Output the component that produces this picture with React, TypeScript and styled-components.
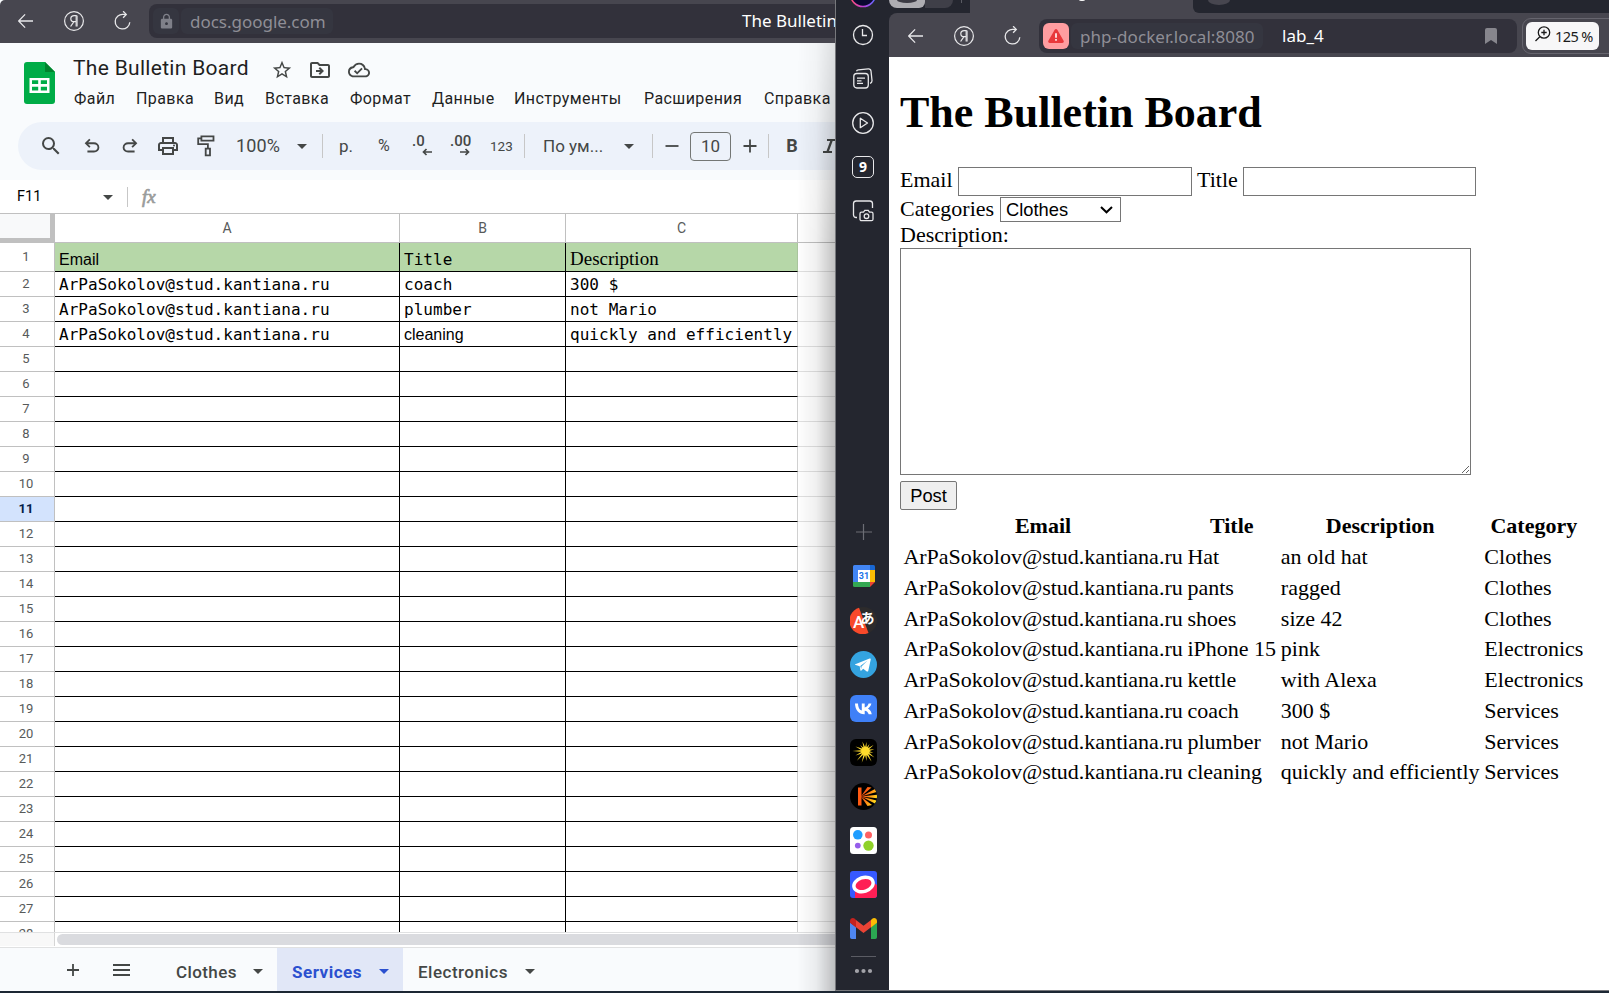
import React from "react";
import styled, { createGlobalStyle } from "styled-components";
import {
  MdSearch,
  MdStarBorder,
  MdOutlineDriveFileMove,
  MdOutlineCloudDone,
  MdOutlinePrint,
  MdLock,
} from "react-icons/md";

const GlobalStyle = createGlobalStyle`
  *, *::before, *::after { box-sizing: border-box; }
  html, body { margin: 0; padding: 0; overflow: hidden; }
  body { background: #1c2733; }
`;

const ui = `Roboto, "Liberation Sans", sans-serif`;
const chromeFont = `"Noto Sans", "Open Sans", sans-serif`;

const Desktop = styled.div`
  display: flex;
  width: 1609px;
  height: 993px;
  overflow: hidden;
  background: #1c2733;
`;

/* ---------- browser chrome ---------- */

const BrowserBar = styled.div<{ $h: number; $pad: string; $radius?: string }>`
  display: flex;
  align-items: center;
  flex: none;
  height: ${(p) => p.$h}px;
  padding: ${(p) => p.$pad};
  background: #47464f;
  border-radius: ${(p) => p.$radius ?? "0"};
`;

const NavIcons = styled.div`
  display: flex;
  align-items: center;
  flex: none;
  width: 131px;
  svg { display: block; flex: none; }
`;

const UrlBar = styled.div<{ $w?: number; $radius?: string }>`
  display: flex;
  align-items: center;
  flex: none;
  width: ${(p) => (p.$w ? `${p.$w}px` : "auto")};
  height: 34px;
  padding: 0 4px;
  border-radius: ${(p) => p.$radius ?? "8px"};
  background: #32313b;
  font-family: ${chromeFont};
  white-space: nowrap;
`;

const SiteBadge = styled.span<{ $danger?: boolean }>`
  display: flex;
  align-items: center;
  justify-content: center;
  flex: none;
  width: 26px;
  height: 26px;
  border-radius: 6px;
  color: #7f8089;
  background: ${(p) => (p.$danger ? "#ff9da0" : "#353640")};
`;

const Host = styled.span<{ $w: number; $ls: number }>`
  flex: none;
  width: ${(p) => p.$w}px;
  height: 26px;
  margin-left: 2px;
  padding-left: 9px;
  border-radius: 6px;
  background: #353640;
  color: #8f8e96;
  font-size: 17px;
  line-height: 27px;
  letter-spacing: ${(p) => p.$ls}px;
`;

const PageTitle = styled.span<{ $left: number }>`
  margin-left: ${(p) => p.$left}px;
  color: #fff;
  font-size: 17px;
  line-height: 26px;
`;

const BackIcon = () => (
  <svg width="16" height="16" viewBox="0 0 16 16" fill="none" stroke="#e8e8ea" strokeWidth="1.3">
    <path d="M15 8H.7M7.100 1.400L.6 8l6.500 6.600" />
  </svg>
);

const YandexIcon = () => (
  <svg width="22" height="22" viewBox="0 0 22 22" fill="none" stroke="#e8e8ea" strokeWidth="1.2">
    <circle cx="11" cy="11" r="9.400" />
    <path d="M13.200 16.500V5.600h-2c-2 0-3.400 1.100-3.400 3.100 0 1.900 1.200 3 3.200 3h2M10.800 11.800l-3.200 4.700" />
    <path d="M14.200 16.500V5.600" strokeWidth="0.9" />
  </svg>
);

const ReloadIcon = () => (
  <svg width="18" height="20" viewBox="0 0 18 20" fill="none" stroke="#e8e8ea" strokeWidth="1.3">
    <path d="M12 3.400H9.300A7.300 7.300 0 1 0 15.800 11.200" />
    <path d="M9.100 .2l3.200 3.200-3.200 3.400" />
  </svg>
);

const Gap = styled.span<{ $w: number }>`
  flex: none;
  width: ${(p) => p.$w}px;
`;

const NavButtons = () => (
  <NavIcons>
    <BackIcon />
    <Gap $w={29} />
    <YandexIcon />
    <Gap $w={29} />
    <ReloadIcon />
  </NavIcons>
);

/* ---------- spreadsheet window ---------- */

const SheetWindow = styled.section`
  position: relative;
  display: flex;
  flex-direction: column;
  flex: none;
  width: 835px;
  height: 991px;
  overflow: hidden;
  background: #f9fbfd;
  font-family: ${ui};
`;

const EdgeShadow = styled.div`
  position: absolute;
  right: 0;
  top: 43px;
  bottom: 0;
  width: 38px;
  background: linear-gradient(to right, rgba(0, 0, 0, 0), rgba(0, 0, 0, 0.06) 50%, rgba(0, 0, 0, 0.24));
  mask-image: linear-gradient(to bottom, rgba(0, 0, 0, 0.45), #000 200px);
  pointer-events: none;
`;

const DocHeader = styled.header`
  display: flex;
  flex: none;
  height: 79px;
  padding: 0 0 0 24px;
`;

const Logo = styled.div`
  flex: none;
  width: 49px;
  padding-top: 19px;
`;

const DocInfo = styled.div`
  flex: none;
`;

const TitleRow = styled.div`
  display: flex;
  align-items: center;
  height: 40px;
  padding-top: 13px;
  color: #444746;
  svg { display: block; flex: none; }
`;

const DocTitle = styled.div`
  width: 198px;
  margin-top: -4px;
  color: #1f1f1f;
  font-size: 21px;
  line-height: 26px;
  letter-spacing: 0.3px;
  white-space: nowrap;
`;

const MenuBar = styled.nav`
  display: flex;
  height: 32px;
  align-items: center;
  padding-left: 1px;
  margin-top: -1px;
  padding-top: 1px;
`;

const MenuItem = styled.span<{ $w: number }>`
  flex: none;
  width: ${(p) => p.$w}px;
  color: #1f1f1f;
  font-size: 16px;
  line-height: 24px;
  letter-spacing: 0.42px;
  white-space: nowrap;
`;

const ToolPill = styled.div`
  display: flex;
  align-items: center;
  flex: none;
  height: 48px;
  margin-left: 18px;
  border-radius: 24px 0 0 24px;
  background: #edf2fa;
  color: #444746;
`;

const Tool = styled.span<{ $w: number; $size?: number; $weight?: number; $start?: boolean; $ls?: number }>`
  display: flex;
  align-items: center;
  justify-content: ${(p) => (p.$start ? "flex-start" : "center")};
  flex: none;
  width: ${(p) => p.$w}px;
  font-size: ${(p) => p.$size ?? 17}px;
  font-weight: ${(p) => p.$weight ?? 400};
  letter-spacing: ${(p) => p.$ls ?? 0}px;
  line-height: 20px;
  white-space: nowrap;
  svg { display: block; flex: none; }
`;

const Divider = styled.span<{ $h: number }>`
  flex: none;
  width: 1px;
  height: ${(p) => p.$h}px;
  background: #c7c7c7;
`;

const SizeBox = styled.span`
  display: flex;
  align-items: center;
  justify-content: center;
  flex: none;
  width: 41px;
  height: 29px;
  border: 1px solid #747775;
  border-radius: 4px;
  font-size: 17px;
`;

const Caret = styled.span<{ $color?: string }>`
  flex: none;
  width: 0;
  height: 0;
  border: 5px solid transparent;
  border-top-color: ${(p) => p.$color ?? "#444746"};
  border-bottom: 0;
`;

const DecimalText = styled.span`
  align-self: flex-start;
  font-size: 15px;
  font-weight: 500;
  line-height: 13px;
`;

const DecimalBox = styled.span<{ $w: number }>`
  display: flex;
  flex-direction: column;
  align-items: flex-start;
  flex: none;
  width: ${(p) => p.$w}px;
  height: 22px;
`;

const FormulaBar = styled.div`
  display: flex;
  align-items: center;
  flex: none;
  height: 34px;
  margin-top: 10px;
  padding: 1px 0 0 17px;
  border-bottom: 1px solid #c0c0c0;
  background: #fff;
`;

const CellName = styled.span`
  width: 86px;
  color: #000;
  font-size: 14.5px;
  line-height: 20px;
`;

const Fx = styled.span`
  margin-left: 14px;
  color: #9a9c9b;
  font: italic 400 19px/22px "Liberation Serif", serif;
  -webkit-text-stroke: 0.7px #9a9c9b;
`;

const Grid = styled.div`
  flex: none;
  height: 718px;
  overflow: hidden;
  background: #fff;
`;

const GridRow = styled.div<{ $h: number }>`
  display: flex;
  height: ${(p) => p.$h}px;
`;

const Corner = styled.div`
  flex: none;
  width: 55px;
  border: solid #c0c0c0;
  border-width: 0 5px 5px 0;
  background: #f8f9fa;
`;

const ColHead = styled.div<{ $w?: number }>`
  display: flex;
  align-items: center;
  justify-content: center;
  flex: ${(p) => (p.$w ? "none" : "1")};
  width: ${(p) => (p.$w ? `${p.$w}px` : "auto")};
  padding-bottom: 1px;
  border: solid #c0c0c0;
  border-width: 0 ${(p) => (p.$w ? 1 : 0)}px 1px 0;
  color: #575a5a;
  font-size: 14px;
`;

const RowHead = styled.div<{ $active?: boolean }>`
  display: flex;
  align-items: center;
  justify-content: center;
  flex: none;
  width: 55px;
  padding: 0 2px 1px 0;
  border: solid #c0c0c0;
  border-width: 0 1px 1px 0;
  background: ${(p) => (p.$active ? "#d3e3fd" : "#fff")};
  color: ${(p) => (p.$active ? "#041e49" : "#575a5a")};
  font-size: 13px;
  line-height: 20px;
  font-weight: ${(p) => (p.$active ? 700 : 400)};
`;

const faces = {
  mono: `400 16px/20px "DejaVu Sans Mono", "Liberation Mono", monospace`,
  sans: `400 16px/20px "Liberation Sans", Arial, sans-serif`,
  serif: `400 19px/20px "Liberation Serif", serif`,
};
type Face = keyof typeof faces;

const Cell = styled.div<{ $w: number; $face: Face; $head?: boolean; $last?: boolean }>`
  display: flex;
  align-items: flex-end;
  flex: none;
  width: ${(p) => p.$w}px;
  padding: 0 0 ${(p) => (p.$face === "serif" ? 2 : 1)}px 4px;
  border: solid #000;
  border-width: 0 1px 1px 0;
  border-right-color: ${(p) => (p.$last ? (p.$head ? "#a9c49d" : "#d0d0d0") : "#000")};
  background: ${(p) => (p.$head ? "#b6d7a8" : "#fff")};
  color: #000;
  font: ${(p) => faces[p.$face]};
  letter-spacing: ${(p) => (p.$face === "mono" ? 0.03 : 0)}px;
  white-space: nowrap;
`;

const OuterCell = styled.div`
  flex: 1;
  border-bottom: 1px solid #e0e0e0;
`;

const ScrollStrip = styled.div`
  display: flex;
  align-items: flex-start;
  flex: none;
  height: 16px;
  border: solid #e0e1e2;
  border-width: 1px 0;
  background: #fff;
`;

const ScrollCorner = styled.div`
  width: 55px;
  height: 13px;
  border-right: 1px solid #d5d5d5;
  background: #f8f8f8;
`;

const ScrollThumb = styled.div`
  flex: 1;
  height: 11px;
  margin: 1px 0 0 2px;
  border-radius: 6px 0 0 6px;
  background: #dadbdf;
`;

const SheetTabs = styled.div`
  display: flex;
  align-items: center;
  flex: none;
  height: 43px;
  padding-left: 67px;
  color: #444746;
`;

const SheetTab = styled.div<{ $w: number; $active?: boolean; $ls: number }>`
  display: flex;
  align-items: center;
  justify-content: space-between;
  flex: none;
  width: ${(p) => p.$w}px;
  height: 43px;
  padding: 4px 14px 0 15px;
  background: ${(p) => (p.$active ? "#e1e7f7" : "transparent")};
  color: ${(p) => (p.$active ? "#2b50cf" : "#444746")};
  font-size: 17px;
  font-weight: ${(p) => (p.$active ? 700 : 500)};
  letter-spacing: ${(p) => p.$ls}px;
`;

/* ---------- php page window ---------- */

const AppWindow = styled.section`
  display: flex;
  flex: none;
  width: 774px;
  height: 991px;
  border-left: 1px solid #77787c;
  border-bottom: 1px solid #77787c;
  overflow: hidden;
  background: #24262f;
`;

const SideRail = styled.aside`
  display: flex;
  flex-direction: column;
  align-items: center;
  justify-content: space-between;
  flex: none;
  width: 53px;
  padding-bottom: 11px;
`;

const RailGroup = styled.div<{ $shift?: number }>`
  display: flex;
  flex-direction: column;
  align-items: center;
  padding-left: ${(p) => p.$shift ?? 0}px;
`;

const RailItem = styled.div<{ $h?: number }>`
  display: flex;
  align-items: center;
  justify-content: center;
  width: 53px;
  height: ${(p) => p.$h ?? 44}px;
  svg { display: block; }
`;

const RailBadge = styled.span`
  display: flex;
  align-items: center;
  justify-content: center;
  width: 22px;
  height: 22px;
  border: 1.3px solid #e8e8ea;
  border-radius: 5px;
  color: #fff;
  font: 700 14px/20px ${chromeFont};
`;

const RailLine = styled.div`
  width: 25px;
  height: 1px;
  background: #5b5c64;
`;

const AppMain = styled.div`
  display: flex;
  flex-direction: column;
  flex: 1;
`;

const TabStrip = styled.div`
  display: flex;
  flex: none;
  height: 13px;
  overflow: hidden;
`;

const TabPill = styled.div<{ $w: number; $color: string; $h: number; $r: string }>`
  display: flex;
  justify-content: center;
  flex: none;
  width: ${(p) => p.$w}px;
  height: ${(p) => p.$h}px;
  border-radius: ${(p) => p.$r};
  background: ${(p) => p.$color};
`;

const TabNub = styled.span<{ $w: number; $h: number; $color: string }>`
  width: ${(p) => p.$w}px;
  height: ${(p) => p.$h}px;
  border-radius: 0 0 50% 50% / 0 0 100% 100%;
  background: ${(p) => p.$color};
`;

const TabTick = styled.div`
  width: 1px;
  height: 3px;
  margin: 0 8px;
  background: #5b5c64;
`;

const InactiveTab = styled.div`
  display: flex;
  flex: 1;
  padding-left: 15px;
  border-radius: 0 0 0 6px;
  background: #24262f;
`;

const TabStripRest = styled.div`
  display: flex;
  flex: 1;
  background: #47464f;
`;

const ZoomFrame = styled.div`
  display: flex;
  align-items: center;
  flex: none;
  width: 100px;
  height: 36px;
  margin-left: 5px;
  padding-left: 3px;
  border: 1px solid #66656e;
  border-radius: 9px;
`;

const ZoomPill = styled.div`
  display: flex;
  align-items: center;
  width: 73px;
  height: 28px;
  padding-left: 9px;
  border-radius: 6px;
  background: #f7f7f8;
  color: #1a1a1a;
  font: 400 14.5px/24px ${chromeFont};
  letter-spacing: -0.6px;
  white-space: nowrap;
  svg { flex: none; margin-top: -3px; }
`;

const ZoomValue = styled.span`
  margin-left: 4px;
`;

const Page = styled.main`
  flex: 1;
  padding: 30px 0 0 11px;
  background: #fff;
  color: #000;
  font: 400 22px/25px "Liberation Serif", "Times New Roman", serif;
`;

const Heading = styled.h1`
  margin: 0 0 29px;
  font-size: 44px;
  line-height: 51px;
`;

const FormLine = styled.div<{ $h: number; $up?: number }>`
  display: flex;
  align-items: center;
  height: ${(p) => p.$h}px;
  padding-bottom: ${(p) => p.$up ?? 0}px;
  white-space: nowrap;
`;

const FieldLabel = styled.label<{ $w: number; $up?: number }>`
  width: ${(p) => p.$w}px;
  margin-top: ${(p) => -(p.$up ?? 0)}px;
`;

const TextField = styled.input<{ $w: number }>`
  width: ${(p) => p.$w}px;
  height: 29px;
  margin: 0;
  border: 1px solid #767676;
  border-radius: 0;
  outline: none;
`;

const Picker = styled.div`
  display: flex;
  align-items: center;
  justify-content: space-between;
  width: 121px;
  height: 25px;
  padding: 0 7px 0 5px;
  border: 1px solid #767676;
  font: 400 18.33px/22px "Liberation Sans", Arial, sans-serif;
`;

const Area = styled.textarea`
  display: block;
  width: 571px;
  height: 227px;
  margin: 0 0 6px;
  border: 1px solid #767676;
  border-radius: 0;
  outline: none;
  resize: both;
`;

const PostButton = styled.button`
  display: block;
  width: 57px;
  height: 29px;
  padding: 0;
  border: 1px solid #767676;
  border-radius: 2px;
  background: #efefef;
  color: #000;
  font: 400 18.33px/22px "Liberation Sans", Arial, sans-serif;
`;

const Board = styled.table`
  border-spacing: 2.75px;
  th, td {
    padding: 1.375px;
    font-size: 22px;
    line-height: 26px;
    white-space: nowrap;
  }
  td { text-align: left; }
`;

const email = "ArPaSokolov@stud.kantiana.ru";

const ads = [
  ["Hat", "an old hat", "Clothes"],
  ["pants", "ragged", "Clothes"],
  ["shoes", "size 42", "Clothes"],
  ["iPhone 15", "pink", "Electronics"],
  ["kettle", "with Alexa", "Electronics"],
  ["coach", "300 $", "Services"],
  ["plumber", "not Mario", "Services"],
  ["cleaning", "quickly and efficiently", "Services"],
];

const menu: [string, number][] = [
  ["Файл", 62],
  ["Правка", 78],
  ["Вид", 51],
  ["Вставка", 85],
  ["Формат", 82],
  ["Данные", 82],
  ["Инструменты", 130],
  ["Расширения", 120],
  ["Справка", 80],
];

type CellData = { text: string; face: Face };
const sheet: CellData[][] = [
  [{ text: "Email", face: "sans" }, { text: "Title", face: "mono" }, { text: "Description", face: "serif" }],
  [{ text: email, face: "mono" }, { text: "coach", face: "mono" }, { text: "300 $", face: "mono" }],
  [{ text: email, face: "mono" }, { text: "plumber", face: "mono" }, { text: "not Mario", face: "mono" }],
  [{ text: email, face: "mono" }, { text: "cleaning", face: "sans" }, { text: "quickly and efficiently", face: "mono" }],
];
const blank: CellData = { text: "", face: "sans" };
const colWidths = [345, 166, 232];
const rows = Array.from({ length: 28 }, (_, i) => sheet[i] ?? [blank, blank, blank]);

const SheetsLogo = () => (
  <svg width="31" height="42" viewBox="0 0 31 42">
    <path d="M3 0h18l10 10v29a3 3 0 0 1-3 3H3a3 3 0 0 1-3-3V3a3 3 0 0 1 3-3z" fill="#00ac47" />
    <path d="M21 0l10 10H21z" fill="#00832d" />
    <path d="M5.500 16h20v15h-20zM8 18.300v3.800h6.200v-3.800zM16.800 18.300v3.800H23v-3.800zM8 24.700v3.800h6.200v-3.800zM16.800 24.700v3.800H23v-3.800z" fill="#fff" fillRule="evenodd" />
  </svg>
);

const UndoIcon = ({ flip }: { flip?: boolean }) => (
  <svg width="22" height="22" viewBox="0 -960 960 960" fill="#444746" transform={flip ? "scale(-1 1)" : undefined}>
    <path d="M280-200v-80h284q63 0 109.500-40T720-420q0-60-46.500-100T564-560H312l104 104-56 56-200-200 200-200 56 56-104 104h252q97 0 163.500 63T800-420q0 94-66.500 157T564-200H280Z" />
  </svg>
);

const PaintIcon = () => (
  <svg width="18" height="22" viewBox="0 0 18 22" fill="none" stroke="#444746" strokeWidth="1.8">
    <path d="M4.400 1.400H16.500V5.600H4.400zM4.400 3.400H1.200V9.200H10.900V13.400M8.700 13.700H13V20.400H8.700z" />
  </svg>
);

const Arrow = ({ flip }: { flip?: boolean }) => (
  <svg width="10" height="8" viewBox="0 0 10 8" fill="none" stroke="#444746" strokeWidth="1.7" transform={flip ? "scale(-1 1)" : undefined}>
    <path d="M0 4h8.500M5.500 1l3 3-3 3" />
  </svg>
);

const SheetPart = () => (
  <SheetWindow>
    <BrowserBar $h={43} $pad="0 0 1px 18px" $radius="5px 0 0 0">
      <NavButtons />
      <UrlBar $w={686} $radius="8px 0 0 8px">
        <SiteBadge>
          <MdLock size={17} />
        </SiteBadge>
        <Host $w={152} $ls={-0.02}>docs.google.com</Host>
        <PageTitle $left={409}>The Bulletin</PageTitle>
      </UrlBar>
    </BrowserBar>
    <DocHeader>
      <Logo>
        <SheetsLogo />
      </Logo>
      <DocInfo>
        <TitleRow>
          <DocTitle>The Bulletin Board</DocTitle>
          <MdStarBorder size={22} />
          <Gap $w={15} />
          <MdOutlineDriveFileMove size={24} />
          <Gap $w={16} />
          <MdOutlineCloudDone size={22} />
        </TitleRow>
        <MenuBar>
          {menu.map(([text, w]) => (
            <MenuItem key={text} $w={w}>{text}</MenuItem>
          ))}
        </MenuBar>
      </DocInfo>
    </DocHeader>
    <ToolPill>
      <Gap $w={13} />
      <Tool $w={40}><MdSearch size={24} /></Tool>
      <Tool $w={41}><UndoIcon /></Tool>
      <Tool $w={36}><UndoIcon flip /></Tool>
      <Tool $w={40}><MdOutlinePrint size={24} /></Tool>
      <Tool $w={35}><PaintIcon /></Tool>
      <Gap $w={13} />
      <Tool $w={61} $size={18} $start $ls={0.1}>100%</Tool>
      <Caret />
      <Gap $w={15} />
      <Divider $h={24} />
      <Gap $w={16} />
      <Tool $w={39} $start>р.</Tool>
      <Tool $w={34} $size={16} $start>%</Tool>
      <DecimalBox $w={38}>
        <DecimalText>.0</DecimalText>
        <Tool $w={20} $start><Gap $w={10} /><Arrow flip /></Tool>
      </DecimalBox>
      <DecimalBox $w={40}>
        <DecimalText>.00</DecimalText>
        <Tool $w={20} $start><Gap $w={10} /><Arrow /></Tool>
      </DecimalBox>
      <Tool $w={34} $size={13.5} $start>123</Tool>
      <Divider $h={24} />
      <Gap $w={18} />
      <Tool $w={81} $start>По ум...</Tool>
      <Caret />
      <Gap $w={18} />
      <Divider $h={24} />
      <Tool $w={37}>
        <svg width="14" height="14" viewBox="0 0 14 14" stroke="#444746" strokeWidth="1.8"><path d="M.5 7h13" /></svg>
      </Tool>
      <SizeBox>10</SizeBox>
      <Tool $w={37}>
        <svg width="14" height="14" viewBox="0 0 14 14" stroke="#444746" strokeWidth="1.8"><path d="M.5 7h13M7 .5v13" /></svg>
      </Tool>
      <Divider $h={24} />
      <Tool $w={46} $size={18} $weight={700}>B</Tool>
      <Tool $w={30}>
        <svg width="16" height="16" viewBox="0 0 16 16" fill="none" stroke="#444746" strokeWidth="2.2"><path d="M5 2h9M1 14h9M9.800 2L5.400 14" /></svg>
      </Tool>
    </ToolPill>
    <FormulaBar>
      <CellName>F11</CellName>
      <Caret />
      <Gap $w={14} />
      <Divider $h={20} />
      <Fx>fx</Fx>
    </FormulaBar>
    <Grid>
      <GridRow $h={29}>
        <Corner />
        <ColHead $w={345}>A</ColHead>
        <ColHead $w={166}>B</ColHead>
        <ColHead $w={232}>C</ColHead>
        <ColHead />
      </GridRow>
      {rows.map((cells, r) => (
        <GridRow key={r} $h={r === 0 ? 29 : 25}>
          <RowHead $active={r === 10}>{r + 1}</RowHead>
          {cells.map((c, i) => (
            <Cell key={i} $w={colWidths[i]} $face={c.face} $head={r === 0} $last={i === 2}>{c.text}</Cell>
          ))}
          <OuterCell />
        </GridRow>
      ))}
    </Grid>
    <ScrollStrip>
      <ScrollCorner />
      <ScrollThumb />
    </ScrollStrip>
    <SheetTabs>
      <svg width="12" height="12" viewBox="0 0 12 12" stroke="#444746" strokeWidth="1.8"><path d="M0 6h12M6 0v12" /></svg>
      <Gap $w={34} />
      <svg width="17" height="12" viewBox="0 0 17 12" stroke="#444746" strokeWidth="1.8"><path d="M0 1h17M0 6h17M0 11h17" /></svg>
      <Gap $w={31} />
      <SheetTab $w={116} $ls={0.4}>Clothes<Caret /></SheetTab>
      <SheetTab $w={126} $ls={0.5} $active>Services<Caret $color="#2b50cf" /></SheetTab>
      <SheetTab $w={146} $ls={0.5}>Electronics<Caret /></SheetTab>
    </SheetTabs>
    <EdgeShadow />
  </SheetWindow>
);

const line = { fill: "none", stroke: "#e8e8ea", strokeWidth: 1.3 };
const rayLengths = [9, 8, 10, 9, 8, 11, 12, 10, 12, 13, 11, 13, 11, 8, 10];

const Rail = () => (
  <SideRail>
    <RailGroup $shift={1}>
      <RailItem $h={13}>
        <svg width="28" height="13" viewBox="0 0 28 13">
          <defs>
            <linearGradient id="ring" x1="0" x2="1"><stop offset="0" stopColor="#ff4f6e" /><stop offset=".5" stopColor="#c03fd8" /><stop offset="1" stopColor="#5a6bff" /></linearGradient>
          </defs>
          <circle cx="14" cy="-6" r="12.500" fill="#0a0830" stroke="url(#ring)" strokeWidth="1.6" />
        </svg>
      </RailItem>
      <RailItem>
        <svg width="24" height="24" viewBox="0 0 24 24" {...line}><circle cx="12" cy="12" r="9.500" /><path d="M11.500 6v6.500H16" /></svg>
      </RailItem>
      <RailItem>
        <svg width="22" height="22" viewBox="0 0 22 22" {...line}>
          <rect x="1.800" y="5.500" width="14.500" height="14.500" rx="3" />
          <path d="M4.500 3.200c.3-.8 1-1.300 1.800-1.400l10-1c1.500-.1 2.500.8 2.700 2.200l1 9.500c.1 1.600-.7 2.600-2 2.800M5 10.200h8M5 12.800h4.500M5 15.400h6" />
        </svg>
      </RailItem>
      <RailItem>
        <svg width="24" height="24" viewBox="0 0 24 24" {...line}><circle cx="12" cy="12" r="10.300" /><path d="M9.300 7.300v9.400l7.200-4.700z" strokeLinejoin="round" /></svg>
      </RailItem>
      <RailItem><RailBadge>9</RailBadge></RailItem>
      <RailItem>
        <svg width="22" height="24" viewBox="0 0 22 24" {...line}>
          <path d="M5 18.500H4.200A2.700 2.700 0 0 1 1.500 16V4.500A2.700 2.700 0 0 1 4.200 2h13.600a2.700 2.700 0 0 1 2.700 2.500V9" />
          <path d="M8 14.700a1.500 1.500 0 0 1 1.500-1.500h2l1.300-1.900h3.400l1.300 1.900h2a1.500 1.500 0 0 1 1.500 1.500v5.500a1.500 1.500 0 0 1-1.500 1.500h-10A1.500 1.500 0 0 1 8 20.200z" />
          <circle cx="14.500" cy="17.200" r="2.300" />
        </svg>
      </RailItem>
    </RailGroup>
    <RailGroup $shift={2}>
      <RailItem>
        <svg width="16" height="16" viewBox="0 0 16 16" fill="none" stroke="#6c6d75" strokeWidth="1.2"><path d="M7.500 0v16M0 8h16" /></svg>
      </RailItem>
      <RailItem>
        <svg width="22" height="22" viewBox="0 0 22 22">
          <path d="M1.500 0H17v5H5v12H0V1.500A1.500 1.500 0 0 1 1.500 0z" fill="#4285f4" />
          <path d="M17 0h3.500A1.500 1.500 0 0 1 22 1.500V5h-5z" fill="#1967d2" />
          <path d="M17 5h5v12h-5z" fill="#fbbc04" />
          <path d="M0 17h17v5H1.500A1.500 1.500 0 0 1 0 20.500z" fill="#34a853" />
          <path d="M17 17h5l-5 5z" fill="#ea4335" />
          <path d="M5 5h12v12H5z" fill="#fff" />
          <text x="11" y="14.300" textAnchor="middle" fontFamily="Roboto" fontWeight="700" fontSize="9" fill="#1a73e8">31</text>
        </svg>
      </RailItem>
      <RailItem>
        <svg width="27" height="27" viewBox="0 0 27 27">
          <circle cx="13.500" cy="13.500" r="13.500" fill="#2d2b2c" />
          <path d="M9 .8A13.500 13.500 0 1 0 18.500 26z" fill="#f8492a" />
          <text x="3" y="20.500" fontFamily="Roboto" fontWeight="500" fontSize="17" fill="#fff">A</text>
          <text x="10.500" y="15.500" fontFamily="Noto Sans CJK JP" fontWeight="700" fontSize="14" fill="#fff">あ</text>
        </svg>
      </RailItem>
      <RailItem>
        <svg width="27" height="27" viewBox="0 0 27 27">
          <circle cx="13.500" cy="13.500" r="13.500" fill="#34a3e0" />
          <path d="M5.300 13.200L19.600 7.600c.8-.3 1.300.2 1.100 1.200l-2.400 11c-.2.900-.8 1-1.500.6l-3.600-2.700-1.800 1.800c-.4.400-.9.300-1-.3l-.7-4-3.900-1.100c-.9-.3-.9-.7-.5-.9zm5 1.700l.9 3.100.3-2.600 5.800-5.600z" fill="#fff" />
        </svg>
      </RailItem>
      <RailItem>
        <svg width="27" height="27" viewBox="0 0 27 27">
          <rect width="27" height="27" rx="6" fill="#3f80f7" />
          <path d="M14.300 19.200C8.700 19.200 5.200 15 5 8.500h3c.1 4.700 2.200 6.700 3.800 7.100V8.500h2.900v4c1.700-.2 3.300-2 3.900-4h2.800c-.5 2.400-2.200 4.200-3.500 5 1.200.6 3.100 2.100 3.900 5.700h-3.100c-.6-2-2.100-3.300-4-3.500v3.500z" fill="#fff" />
        </svg>
      </RailItem>
      <RailItem>
        <svg width="27" height="27" viewBox="0 0 27 27">
          <rect width="27" height="27" rx="6" fill="#000" />
          <g transform="translate(15.500 12)" fill="#ffdc2d">
            <circle r="4.200" />
            {rayLengths.map((len, i) => (
              <path key={i} d={`M-1.300 0L0 ${-len}L1.300 0z`} transform={`rotate(${i * 24 + 6})`} />
            ))}
          </g>
        </svg>
      </RailItem>
      <RailItem>
        <svg width="27" height="27" viewBox="0 0 27 27">
          <defs>
            <clipPath id="kclip"><circle cx="13.500" cy="13.500" r="13.500" /></clipPath>
            <linearGradient id="kray" gradientUnits="userSpaceOnUse" x1="11" y1="9" x2="27" y2="16"><stop offset=".25" stopColor="#ff5a12" /><stop offset="1" stopColor="#ffe01c" /></linearGradient>
          </defs>
          <circle cx="13.500" cy="13.500" r="13.500" fill="#000" />
          <g clipPath="url(#kclip)" fill="url(#kray)">
            <path d="M11 13.500L17.500 4l4 .5z" />
            <path d="M11 13.500L25 6l1.500 3z" />
            <path d="M11 13.500l16-1.700v3.400z" />
            <path d="M11 13.500L26.500 17.500l-1.500 3z" />
            <path d="M11 13.500l11 8.500-4.500 1z" />
            <path d="M8 4.500h3.500v18H8z" fill="#ff5a12" />
          </g>
        </svg>
      </RailItem>
      <RailItem>
        <svg width="27" height="27" viewBox="0 0 27 27">
          <rect width="27" height="27" rx="3.500" fill="#fff" />
          <circle cx="7.800" cy="7.800" r="4.800" fill="#1f9dff" />
          <circle cx="18.500" cy="8" r="3.500" fill="#ff6163" />
          <circle cx="7.800" cy="18.600" r="2.900" fill="#965eeb" />
          <circle cx="18.500" cy="18.600" r="5.200" fill="#8fd129" />
        </svg>
      </RailItem>
      <RailItem>
        <svg width="27" height="27" viewBox="0 0 27 27">
          <defs><clipPath id="kp"><rect width="27" height="27" rx="3" /></clipPath></defs>
          <g clipPath="url(#kp)">
            <path d="M0 0h27v27H0z" fill="#3659ff" />
            <path d="M5 19l19-7 3 2v13H5z" fill="#ff1f55" />
            <ellipse cx="13.500" cy="13.500" rx="9.900" ry="6.900" transform="rotate(-18 13.500 13.500)" fill="#ff1f55" stroke="#fff" strokeWidth="3.4" />
          </g>
        </svg>
      </RailItem>
      <RailItem>
        <svg width="27" height="21" viewBox="0 0 27 21">
          <path d="M0 4.500l6 4.600V21H1.800A1.800 1.800 0 0 1 0 19.200z" fill="#4f86f0" />
          <path d="M27 4.500l-6 4.600V21h4.200a1.800 1.800 0 0 0 1.800-1.800z" fill="#2ba752" />
          <path d="M6 2l7.500 5.700L21 2v7.300l-7.500 5.800L6 9.300z" fill="#ea4335" />
          <path d="M0 4.800V3C0 .4 2.900-.9 4.800.8L6 1.900v7.500z" fill="#c5221f" />
          <path d="M27 4.800V3c0-2.600-2.900-3.900-4.800-2.200L21 1.900v7.500z" fill="#fbbc04" />
        </svg>
      </RailItem>
      <RailItem $h={12}><RailLine /></RailItem>
      <RailItem $h={17}>
        <svg width="18" height="6" viewBox="0 0 18 6" fill="#a2a2a8"><circle cx="2" cy="3" r="2.100" /><circle cx="8.500" cy="3" r="2.100" /><circle cx="15" cy="3" r="2.100" /></svg>
      </RailItem>
    </RailGroup>
  </SideRail>
);

const AppPart = () => (
  <AppWindow>
    <Rail />
    <AppMain>
      <TabStrip>
        <TabPill $w={36} $h={8} $color="#aeadb2" $r="0 0 6px 8px">
          <TabNub $w={20} $h={3} $color="#3b3a43" />
        </TabPill>
        <TabPill $w={28} $h={8} $color="#3f3f48" $r="0 0 8px 0" />
        <TabTick />
        <TabStripRest>
          <TabPill $w={223} $h={13} $color="#47464f" $r="0">
            <TabNub $w={6} $h={1} $color="#fff" />
          </TabPill>
          <InactiveTab>
            <TabNub $w={22} $h={5} $color="#47464f" />
          </InactiveTab>
        </TabStripRest>
      </TabStrip>
      <BrowserBar $h={44} $pad="1px 0 0 19px" $radius="8px 0 0 0">
        <NavButtons />
        <UrlBar $w={478}>
          <SiteBadge $danger>
            <svg width="16" height="14" viewBox="0 0 16 14">
              <path d="M6.700.8a1.500 1.500 0 0 1 2.600 0l6.300 11c.6 1-.1 2.200-1.300 2.200H1.700C.5 14-.2 12.800.4 11.800z" fill="#e8383b" />
              <path d="M7.200 4.200h1.600v4.600H7.200zM7.200 10h1.600v1.700H7.200z" fill="#fff" />
            </svg>
          </SiteBadge>
          <Host $w={192} $ls={0.05}>php-docker.local:8080</Host>
          <PageTitle $left={19}>lab_4</PageTitle>
          <Gap $w={161} />
          <svg width="12" height="16" viewBox="0 0 12 16"><path d="M0 2a2 2 0 0 1 2-2h8a2 2 0 0 1 2 2v14l-6-4-6 4z" fill="#87868d" /></svg>
        </UrlBar>
        <ZoomFrame>
          <ZoomPill>
            <svg width="16" height="16" viewBox="0 0 16 16" fill="none" stroke="#1a1a1a" strokeWidth="1.3">
              <circle cx="9" cy="6.500" r="5.700" />
              <path d="M4.800 10.700L.5 15M9 3.800v5.400M6.300 6.500h5.400" />
            </svg>
            <ZoomValue>125 %</ZoomValue>
          </ZoomPill>
        </ZoomFrame>
      </BrowserBar>
      <Page>
        <Heading>The Bulletin Board</Heading>
        <FormLine $h={29}>
          <FieldLabel $w={58} $up={5}>Email</FieldLabel>
          <TextField $w={234} />
          <Gap $w={5} />
          <FieldLabel $w={46} $up={5}>Title</FieldLabel>
          <TextField $w={233} />
        </FormLine>
        <FormLine $h={27}>
          <FieldLabel $w={100} $up={2}>Categories</FieldLabel>
          <Picker>
            Clothes
            <svg width="13" height="8" viewBox="0 0 13 8" fill="none" stroke="#000" strokeWidth="2"><path d="M1 1l5.500 5.300L12 1" /></svg>
          </Picker>
        </FormLine>
        <FormLine $h={25} $up={2}>Description:</FormLine>
        <Area />
        <PostButton>Post</PostButton>
        <Board>
          <thead>
            <tr><th>Email</th><th>Title</th><th>Description</th><th>Category</th></tr>
          </thead>
          <tbody>
            {ads.map(([title, text, category]) => (
              <tr key={title}>
                <td>{email}</td>
                <td>{title}</td>
                <td>{text}</td>
                <td>{category}</td>
              </tr>
            ))}
          </tbody>
        </Board>
      </Page>
    </AppMain>
  </AppWindow>
);

export default function App() {
  return (
    <>
      <GlobalStyle />
      <Desktop>
        <SheetPart />
        <AppPart />
      </Desktop>
    </>
  );
}
